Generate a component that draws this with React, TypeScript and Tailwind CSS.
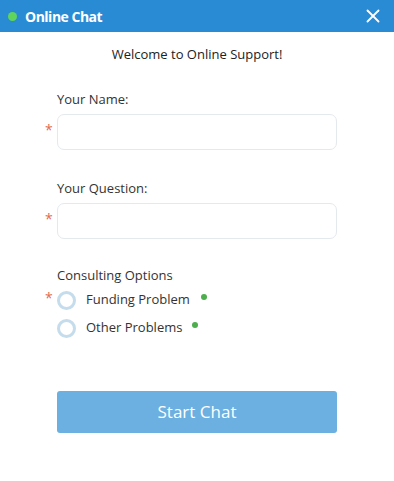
import { X } from 'lucide-react'

const FONT = { fontFamily: '"Open Sans", "Noto Sans", sans-serif' }

function Star() {
  return <span className="w-[10px] shrink-0 text-[14px] leading-none text-[#e06b4f]">*</span>
}

function Field({ label, top }: { label: string; top: string }) {
  return (
    <div className={top}>
      <div className="pl-[57px] text-[13px] leading-[18px] text-[#333]">{label}</div>
      <div className="mt-[6px] flex items-start pl-[45px]">
        <span className="mt-[3px] w-[12px]"><Star /></span>
        <div className="h-[36px] w-[280px] rounded-[7px] border border-[#e4e9ee] bg-white" />
      </div>
    </div>
  )
}

function Radio({ label, dotGap }: { label: string; dotGap: string }) {
  return (
    <div className="flex h-[28px] items-center">
      <span className="h-[19px] w-[19px] rounded-full border-[3px] border-[#c4dcec] bg-white" />
      <span className="ml-[10px] text-[13px] text-[#333]">{label}</span>
      <span className={`${dotGap} -mt-[6px] h-[6px] w-[6px] rounded-full bg-[#4cae4c]`} />
    </div>
  )
}

export default function App() {
  return (
    <div className="h-[481px] w-[394px] bg-white" style={FONT}>
      <div className="flex h-[32px] items-center bg-[#2a8bd5] pl-[8px] pr-[10px]">
        <span className="h-[9px] w-[9px] rounded-full bg-[#5fd55b]" />
        <span className="ml-[8px] text-[14px] font-bold tracking-[-0.5px] text-white">Online Chat</span>
        <X className="ml-auto h-[22px] w-[22px] text-white" strokeWidth={2} />
      </div>

      <div className="mt-[13px] text-center text-[13px] leading-[18px] text-[#222]">
        Welcome to Online Support!
      </div>

      <Field label="Your Name:" top="mt-[27px]" />
      <Field label="Your Question:" top="mt-[29px]" />

      <div className="mt-[27px]">
        <div className="pl-[57px] text-[13px] leading-[18px] text-[#333]">Consulting Options</div>
        <div className="mt-[2px] flex pl-[45px]">
          <span className="-mt-[1px] w-[12px]"><Star /></span>
          <div>
            <Radio label="Funding Problem" dotGap="ml-[11px]" />
            <Radio label="Other Problems" dotGap="ml-[10px]" />
          </div>
        </div>
      </div>

      <div className="mt-[49px] pl-[57px]">
        <button className="h-[42px] w-[280px] rounded-[3px] bg-[#6bb0e1] text-[17px] text-white">
          Start Chat
        </button>
      </div>
    </div>
  )
}
